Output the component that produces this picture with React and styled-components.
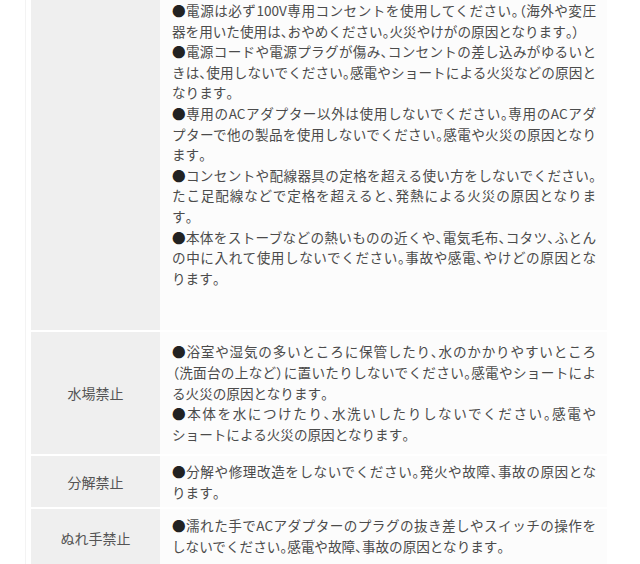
import React from "react";
import styled, { createGlobalStyle } from "styled-components";

const GlobalStyle = createGlobalStyle`
  body {
    margin: 0;
    background: #ffffff;
    font-family: "Noto Sans CJK JP", "Noto Sans", sans-serif;
    color: #4b4b4b;
  }
`;

const Page = styled.div`
  margin-left: 25px;
  border-left: 1px solid #f3f3f3;
  padding-left: 5px;
  width: 576px;
  overflow: hidden;
`;

const Table = styled.div`
  display: flex;
  flex-direction: column;
  gap: 2px;
  margin-top: -10px;
`;

const Row = styled.div`
  display: grid;
  grid-template-columns: 129px 447px;
`;

const Label = styled.div`
  background: #efefef;
  display: flex;
  align-items: center;
  justify-content: center;
  font-size: 14px;
  color: #545454;
`;

const Body = styled.div`
  background: #fcfcfc;
  padding: ${p => p.$top}px 11px ${p => p.$bottom}px 12px;
  font-size: 13.6px;
  line-height: 20.6px;
`;

const Item = styled.div`
  display: flex;
  flex-direction: column;
`;

const Line = styled.span`
  display: block;
  white-space: nowrap;
  text-align: ${p => (p.$last ? "left" : "justify")};
  text-align-last: ${p => (p.$last ? "left" : "justify")};
`;

const Punct = styled.span`
  font-feature-settings: "palt";
`;

const Dot = styled.span`
  color: #222222;
`;

const rows = [
  {
    label: "",
    top: 10,
    bottom: 42,
    items: [
      [
        "●電源は必ず100V専用コンセントを使用してください。（海外や変圧",
        "器を用いた使用は、おやめください。火災やけがの原因となります。）",
      ],
      [
        "●電源コードや電源プラグが傷み、コンセントの差し込みがゆるいと",
        "きは、使用しないでください。感電やショートによる火災などの原因と",
        "なります。",
      ],
      [
        "●専用のACアダプター以外は使用しないでください。専用のACアダ",
        "プターで他の製品を使用しないでください。感電や火災の原因となり",
        "ます。",
      ],
      [
        "●コンセントや配線器具の定格を超える使い方をしないでください。",
        "たこ足配線などで定格を超えると、発熱による火災の原因となりま",
        "す。",
      ],
      [
        "●本体をストーブなどの熱いものの近くや、電気毛布、コタツ、ふとん",
        "の中に入れて使用しないでください。事故や感電、やけどの原因とな",
        "ります。",
      ],
    ],
  },
  {
    label: "水場禁止",
    top: 9,
    bottom: 10,
    items: [
      [
        "●浴室や湿気の多いところに保管したり、水のかかりやすいところ",
        "（洗面台の上など）に置いたりしないでください。感電やショートによ",
        "る火災の原因となります。",
      ],
      [
        "●本体を水につけたり、水洗いしたりしないでください。感電や",
        "ショートによる火災の原因となります。",
      ],
    ],
  },
  {
    label: "分解禁止",
    top: 5,
    bottom: 5,
    items: [
      [
        "●分解や修理改造をしないでください。発火や故障、事故の原因とな",
        "ります。",
      ],
    ],
  },
  {
    label: "ぬれ手禁止",
    top: 6,
    bottom: 10,
    items: [
      [
        "●濡れた手でACアダプターのプラグの抜き差しやスイッチの操作を",
        "しないでください。感電や故障、事故の原因となります。",
      ],
    ],
  },
];

const renderText = text =>
  text.split(/([、。（）●])/).map((part, i) => {
    if (part === "●") return <Dot key={i}>●</Dot>;
    if (/^[、。（）]$/.test(part)) return <Punct key={i}>{part}</Punct>;
    return part;
  });

export default function App() {
  return (
    <>
      <GlobalStyle />
      <Page>
        <Table>
          {rows.map((row, r) => (
            <Row key={r}>
              <Label>{row.label}</Label>
              <Body $top={row.top} $bottom={row.bottom}>
                {row.items.map((lines, i) => (
                  <Item key={i}>
                    {lines.map((line, j) => (
                      <Line key={j} $last={j === lines.length - 1}>
                        {renderText(line)}
                      </Line>
                    ))}
                  </Item>
                ))}
              </Body>
            </Row>
          ))}
        </Table>
      </Page>
    </>
  );
}
